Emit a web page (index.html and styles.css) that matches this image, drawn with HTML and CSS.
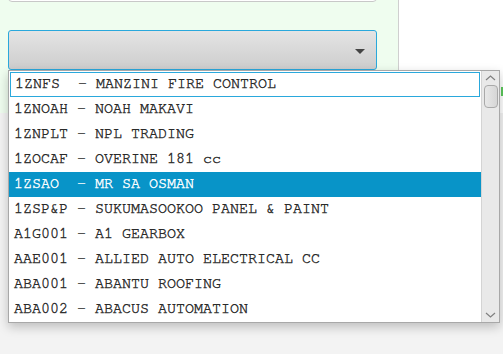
FILE: index.html
```html
<!DOCTYPE html>
<html>
  <head>
    <title>Account picker</title>
    <link rel="stylesheet" href="styles.css">
  </head>
  <body>
    <div class="top">
      <div class="panel">
        <div class="field"></div>
        <div class="select">
          <span class="caret"></span>
        </div>
      </div>
      <div class="side"></div>
    </div>

    <span class="edge"></span>

    <!-- open dropdown list -->
    <div class="popup">
      <ul class="list">
        <li class="item focus">1ZNFS&nbsp; - MANZINI FIRE CONTROL</li>
        <li class="item">1ZNOAH - NOAH MAKAVI</li>
        <li class="item">1ZNPLT - NPL TRADING</li>
        <li class="item">1ZOCAF - OVERINE 181 cc</li>
        <li class="item selected">1ZSAO&nbsp; - MR SA OSMAN</li>
        <li class="item">1ZSP&amp;P - SUKUMASOOKOO PANEL &amp; PAINT</li>
        <li class="item">A1G001 - A1 GEARBOX</li>
        <li class="item">AAE001 - ALLIED AUTO ELECTRICAL CC</li>
        <li class="item">ABA001 - ABANTU ROOFING</li>
        <li class="item">ABA002 - ABACUS AUTOMATION</li>
      </ul>
      <div class="scroll">
        <svg class="arrow" width="17" height="14" viewBox="0 0 17 14">
          <path d="M4 9 L8.5 5 L13 9" fill="none" stroke="#808080" stroke-width="1.2"/>
        </svg>
        <div class="thumb"></div>
        <div class="track"></div>
        <svg class="arrow" width="17" height="14" viewBox="0 0 17 14">
          <path d="M4 5 L8.5 9 L13 5" fill="none" stroke="#808080" stroke-width="1.2"/>
        </svg>
      </div>
    </div>
  </body>
</html>
```

FILE: styles.css
```css
* {
  box-sizing: border-box;
  margin: 0;
  padding: 0;
}
body {
  background-color: #f3f3f3;
  font-family: "Nimbus Mono PS", "FreeMono", "Courier New", "Liberation Mono", monospace;
  font-size: 15px;
  color: #2a2a2a;
  -webkit-text-stroke: 0.4px #2a2a2a;
  position: relative;
  height: 354px;
  overflow: hidden;
}
.top {
  display: flex;
  height: 113px;
}
.panel {
  width: 399px;
  background-color: #effdef;
  border-right: 1px solid #cfcfcf;
  padding: 0 21px 0 8px;
}
.side {
  flex: 1;
  background-color: #fff;
}
.field {
  height: 6px;
  margin-top: -4px;
  background-color: #fff;
  border: 1px solid #c8c8c8;
  border-radius: 0 0 4px 4px;
}
.select {
  display: flex;
  align-items: center;
  justify-content: flex-end;
  margin-top: 28px;
  height: 40px;
  padding-right: 11px;
  border: 1px solid #2aa8dc;
  border-radius: 3px;
  background: linear-gradient(#e4e4e4, #cdcdcd);
}
.caret {
  width: 0;
  height: 0;
  border-left: 5px solid transparent;
  border-right: 5px solid transparent;
  border-top: 5px solid #444;
  margin-top: 2px;
}
.edge {
  position: absolute;
  left: 501px;
  top: 87px;
  width: 2px;
  height: 9px;
  background-color: #5cc85c;
}
.popup {
  position: absolute;
  left: 8px;
  top: 70px;
  width: 492px;
  height: 253px;
  display: flex;
  background-color: #fff;
  border: 1px solid #a8a8a8;
  box-shadow: 0 4px 10px rgba(0, 0, 0, 0.22);
}
.list {
  flex: 1;
  list-style: none;
  padding-top: 1px;
}
.item {
  height: 25px;
  line-height: 23px;
  padding-left: 5px;
  white-space: nowrap;
}
.focus {
  margin: 0 1px;
  padding-left: 4px;
  line-height: 21px;
  border: 1px solid #2aa8dc;
}
.selected {
  background-color: #0894c8;
  color: #fff;
  -webkit-text-stroke-color: #fff;
}
.scroll {
  width: 18px;
  display: flex;
  flex-direction: column;
  align-items: center;
  background-color: #e9e9e9;
  border-left: 1px solid #d4d4d4;
  -webkit-text-stroke: 0;
}
.arrow {
  flex: none;
}
.thumb {
  width: 14px;
  height: 23px;
  border: 1px solid #a9a9a9;
  border-radius: 4px;
  background: linear-gradient(to right, #e8e8e8, #d6d6d6);
}
.track {
  flex: 1;
}
```
